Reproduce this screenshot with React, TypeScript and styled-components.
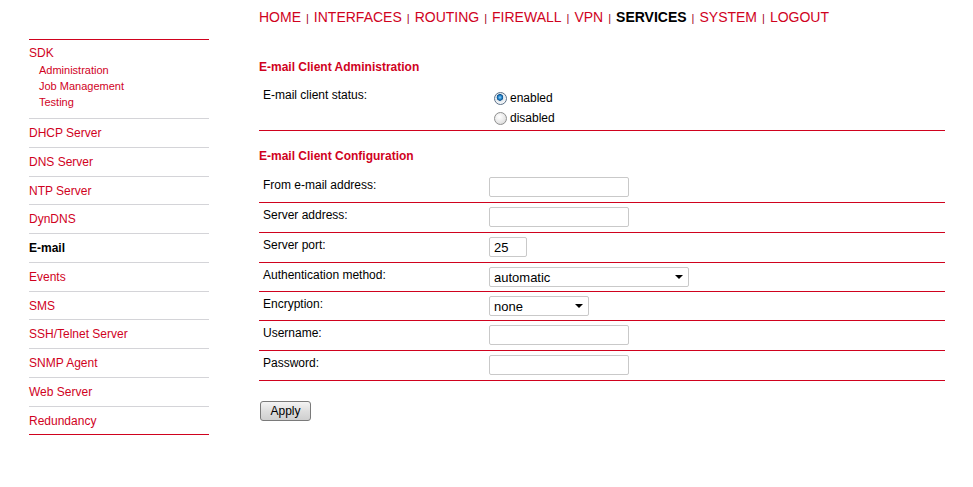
import React from "react";
import styled, { createGlobalStyle } from "styled-components";

const red = "#d0021e";

const GlobalStyle = createGlobalStyle`
  body {
    margin: 0;
    background: #fff;
    font-family: "Liberation Sans", Arial, sans-serif;
    font-size: 12px;
    color: #000;
  }
`;

const navItems = ["HOME", "INTERFACES", "ROUTING", "FIREWALL", "VPN", "SERVICES", "SYSTEM", "LOGOUT"];
const menu = [
  "DHCP Server",
  "DNS Server",
  "NTP Server",
  "DynDNS",
  "E-mail",
  "Events",
  "SMS",
  "SSH/Telnet Server",
  "SNMP Agent",
  "Web Server",
  "Redundancy"
];

function TextField({ width, value }: { width: number; value?: string }) {
  return <Input type="text" defaultValue={value} $width={width} />;
}

function Dropdown({ width, value }: { width: number; value: string }) {
  return (
    <SelectWrap $width={width}>
      <Select defaultValue={value}>
        <option>{value}</option>
      </Select>
      <Arrow />
    </SelectWrap>
  );
}

export default function App() {
  return (
    <>
      <GlobalStyle />
      <Page>
        <Sidebar>
          <SdkBlock>
            <MenuLink>SDK</MenuLink>
            <SubList>
              <SubLink>Administration</SubLink>
              <SubLink>Job Management</SubLink>
              <SubLink>Testing</SubLink>
            </SubList>
          </SdkBlock>
          {menu.map((m, i) => (
            <MenuRow key={m} $last={i === menu.length - 1} $tight={i % 4 === 2}>
              <MenuLink $active={m === "E-mail"}>{m}</MenuLink>
            </MenuRow>
          ))}
        </Sidebar>

        <Main>
          <Nav>
            {navItems.map((n, i) => (
              <React.Fragment key={n}>
                {i > 0 && <Sep>|</Sep>}
                <NavLink $active={n === "SERVICES"}>{n}</NavLink>
              </React.Fragment>
            ))}
          </Nav>

          <Heading $top={34}>E-mail Client Administration</Heading>
          <Row $bottom={2}>
            <Label>E-mail client status:</Label>
            <RadioGroup>
              <RadioLine>
                <Radio type="radio" name="status" defaultChecked />
                enabled
              </RadioLine>
              <RadioLine>
                <Radio type="radio" name="status" />
                disabled
              </RadioLine>
            </RadioGroup>
          </Row>

          <Heading $top={18} $gap={10}>E-mail Client Configuration</Heading>
          <Row>
            <Label>From e-mail address:</Label>
            <div><TextField width={140} /></div>
          </Row>
          <Row>
            <Label>Server address:</Label>
            <div><TextField width={140} /></div>
          </Row>
          <Row>
            <Label>Server port:</Label>
            <div><TextField width={38} value="25" /></div>
          </Row>
          <Row $bottom={4}>
            <Label>Authentication method:</Label>
            <div><Dropdown width={200} value="automatic" /></div>
          </Row>
          <Row $bottom={4}>
            <Label>Encryption:</Label>
            <div><Dropdown width={100} value="none" /></div>
          </Row>
          <Row>
            <Label>Username:</Label>
            <div><TextField width={140} /></div>
          </Row>
          <Row>
            <Label>Password:</Label>
            <div><TextField width={140} /></div>
          </Row>

          <ApplyButton>Apply</ApplyButton>
        </Main>
      </Page>
    </>
  );
}

const Page = styled.div`
  display: flex;
  align-items: flex-start;
  padding-left: 29px;
`;

const Sidebar = styled.div`
  width: 180px;
  margin-top: 39px;
  border-top: 1px solid ${red};
`;

const SdkBlock = styled.div`
  padding: 6px 0 8px;
  border-bottom: 1px solid #d4d4d8;
`;

const MenuRow = styled.div<{ $last?: boolean; $tight?: boolean }>`
  padding: 7px 0 ${p => (p.$tight ? 6 : 7)}px;
  border-bottom: 1px solid ${p => (p.$last ? red : "#d4d4d8")};
`;

const MenuLink = styled.div<{ $active?: boolean }>`
  font-size: 12px;
  line-height: 14px;
  color: ${p => (p.$active ? "#000" : red)};
  font-weight: ${p => (p.$active ? "bold" : "normal")};
`;

const SubList = styled.div`
  margin-top: 2px;
  padding-left: 10px;
`;

const SubLink = styled.div`
  font-size: 11px;
  line-height: 16px;
  color: ${red};
`;

const Main = styled.div`
  width: 686px;
  margin-left: 50px;
  padding-top: 9px;
`;

const Nav = styled.div`
  font-size: 14px;
  line-height: 16px;
  white-space: nowrap;
`;

const NavLink = styled.span<{ $active?: boolean }>`
  color: ${p => (p.$active ? "#000" : red)};
  font-weight: ${p => (p.$active ? "bold" : "normal")};
`;

const Sep = styled.span`
  font-size: 11px;
  color: #a0001a;
  margin: 0 5px;
`;

const Heading = styled.div<{ $top: number; $gap?: number }>`
  margin-top: ${p => p.$top}px;
  margin-bottom: ${p => p.$gap ?? 9}px;
  color: ${red};
  font-weight: bold;
  font-size: 12px;
  line-height: 14px;
`;

const Row = styled.div<{ $bottom?: number }>`
  display: grid;
  grid-template-columns: 230px 1fr;
  align-items: start;
  padding: 4px 0 ${p => p.$bottom ?? 5}px;
  border-bottom: 1px solid ${red};
`;

const Label = styled.div`
  padding: 1px 0 0 4px;
  font-size: 12px;
  line-height: 14px;
`;

const RadioGroup = styled.div`
  padding-top: 1px;
`;

const RadioLine = styled.label`
  display: flex;
  align-items: center;
  height: 20px;
  font-size: 12px;
`;

const Radio = styled.input`
  appearance: none;
  width: 13px;
  height: 13px;
  margin: 0 3px 0 5px;
  border-radius: 50%;
  border: 1px solid #8e8f8f;
  background: radial-gradient(circle at 40% 35%, #ffffff 0%, #e6e6e6 60%, #cfcfcf 100%);
  box-sizing: border-box;
  &:checked {
    border-color: #5a6f86;
    background: radial-gradient(circle at 45% 40%, #8fd3ff 0%, #1f7fc4 22%, #0a4f8c 34%, #dfe6ec 40%, #f6f8fa 70%, #d5dde4 100%);
  }
`;

const Input = styled.input<{ $width: number }>`
  display: block;
  box-sizing: border-box;
  width: ${p => p.$width}px;
  height: 20px;
  margin: 0;
  padding: 1px 4px 0;
  border: 1px solid #c9c9c9;
  border-radius: 2px;
  font-family: "Liberation Sans", Arial, sans-serif;
  font-size: 13px;
  color: #000;
  outline: none;
`;

const SelectWrap = styled.div<{ $width: number }>`
  position: relative;
  width: ${p => p.$width}px;
  height: 20px;
`;

const Select = styled.select`
  appearance: none;
  box-sizing: border-box;
  width: 100%;
  height: 20px;
  margin: 0;
  padding: 1px 4px 0;
  border: 1px solid #c9c9c9;
  border-radius: 2px;
  background: #fff;
  font-family: "Liberation Sans", Arial, sans-serif;
  font-size: 13px;
  color: #000;
  outline: none;
`;

const Arrow = styled.span`
  position: absolute;
  right: 6px;
  top: 8px;
  width: 0;
  height: 0;
  border-left: 4px solid transparent;
  border-right: 4px solid transparent;
  border-top: 4px solid #000;
  pointer-events: none;
`;

const ApplyButton = styled.button`
  display: block;
  margin: 20px 0 0 1px;
  width: 51px;
  height: 20px;
  padding: 0;
  border: 1px solid #7a7a7a;
  border-radius: 3px;
  background: linear-gradient(#f4f4f4, #dedede 50%, #cfcfcf);
  font-family: "Liberation Sans", Arial, sans-serif;
  font-size: 12px;
  color: #000;
`;
